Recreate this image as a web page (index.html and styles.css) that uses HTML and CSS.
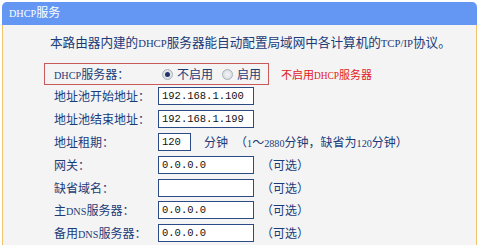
FILE: index.html
```html
<!DOCTYPE html>
<html lang="zh-CN">
<head>
    <meta charset="UTF-8">
    <meta name="viewport" content="width=device-width, initial-scale=1.0">
    <title>DHCP服务</title>
    <link rel="stylesheet" href="styles.css">
</head>
<body>
    <div class="panel">
        <div class="panel-title"><span class="en">DHCP</span>服务</div>
        <div class="panel-body">
            <p class="intro">本路由器内建的<span class="en">DHCP</span>服务器能自动配置局域网中各计算机的<span class="en">TCP/IP</span>协议。</p>

            <div class="row-first">
                <div class="highlight">
                    <span class="label"><span class="en">DHCP</span>服务器：</span>
                    <label class="radio"><span class="dot checked"></span>不启用</label>
                    <label class="radio"><span class="dot"></span>启用</label>
                </div>
                <span class="hint">不启用<span class="en">DHCP</span>服务器</span>
            </div>

            <div class="row">
                <span class="label">地址池开始地址：</span>
                <input class="field" type="text" value="192.168.1.100">
            </div>
            <div class="row">
                <span class="label">地址池结束地址：</span>
                <input class="field" type="text" value="192.168.1.199">
            </div>
            <div class="row">
                <span class="label">地址租期：</span>
                <input class="field short" type="text" value="120">
                <span class="unit">分钟</span>
                <span class="note">（<span class="en">1</span>～<span class="en">2880</span>分钟，缺省为<span class="en">120</span>分钟）</span>
            </div>
            <div class="row">
                <span class="label">网关：</span>
                <input class="field" type="text" value="0.0.0.0">
                <span class="note">（可选）</span>
            </div>
            <div class="row">
                <span class="label">缺省域名：</span>
                <input class="field" type="text" value="">
                <span class="note">（可选）</span>
            </div>
            <div class="row">
                <span class="label">主<span class="en">DNS</span>服务器：</span>
                <input class="field" type="text" value="0.0.0.0">
                <span class="note">（可选）</span>
            </div>
            <div class="row">
                <span class="label">备用<span class="en">DNS</span>服务器：</span>
                <input class="field" type="text" value="0.0.0.0">
                <span class="note">（可选）</span>
            </div>
        </div>
    </div>
</body>
</html>
```

FILE: styles.css
```css
body {
    margin: 0;
    background: #ffffff;
    font-family: "Liberation Serif", "Noto Sans CJK SC", serif;
    font-size: 12px;
    color: #1b3b78;
}

/* latin text in the old bitmap font is narrow, so shrink it */
.en {
    font-size: 0.85em;
}

.panel {
    margin: 2px 4px 0 2px;
}

.panel-title {
    height: 23px;
    line-height: 23px;
    padding-left: 7px;
    background: #6497f3;
    color: #ffffff;
    border-radius: 5px 5px 0 0;
}

.panel-body {
    background: #f4f4f4;
    border-left: 1px solid #f2c46c;
    border-right: 1px solid #f2c46c;
    height: 230px;
}

.intro {
    margin: 0;
    padding: 9px 0 0 47px;
    line-height: 18px;
    font-size: 12.6px;
    white-space: nowrap;
}

.row-first {
    display: flex;
    align-items: center;
    margin-top: 11px;
}

.highlight {
    display: flex;
    align-items: center;
    flex: none;
    box-sizing: border-box;
    width: 225px;
    height: 22px;
    margin-left: 41px;
    padding-left: 9px;
    border: 1px solid #c85a5a;
}

.hint {
    margin-left: 12px;
    font-size: 11px;
    color: #e0201c;
    white-space: nowrap;
}

.row {
    display: flex;
    align-items: center;
    height: 22.8px;
    padding-left: 51px;
    white-space: nowrap;
}

.label {
    width: 104px;
    flex: none;
    white-space: nowrap;
}

.radio {
    display: flex;
    align-items: center;
    flex: none;
    white-space: nowrap;
    margin-left: 4px;
    margin-right: 5px;
}

.dot {
    flex: none;
    width: 9px;
    height: 9px;
    margin-right: 4px;
    border: 1px solid #a9b0b8;
    border-radius: 50%;
    background: radial-gradient(circle, #f4f4f4 0%, #d2d6db 100%);
    position: relative;
}

.dot.checked::after {
    content: "";
    position: absolute;
    left: 2px;
    top: 2px;
    width: 5px;
    height: 5px;
    border-radius: 50%;
    background: #1f3568;
}

.field {
    flex: none;
    box-sizing: border-box;
    width: 96px;
    height: 18px;
    margin: 0;
    padding: 0 0 0 3px;
    border: 1px solid #2c4a86;
    background: #ffffff;
    font-family: "Liberation Mono", monospace;
    font-size: 10.5px;
    color: #111111;
}

.field.short {
    width: 33px;
}

.unit {
    margin-left: 13px;
}

.note {
    margin-left: 7px;
}
```
